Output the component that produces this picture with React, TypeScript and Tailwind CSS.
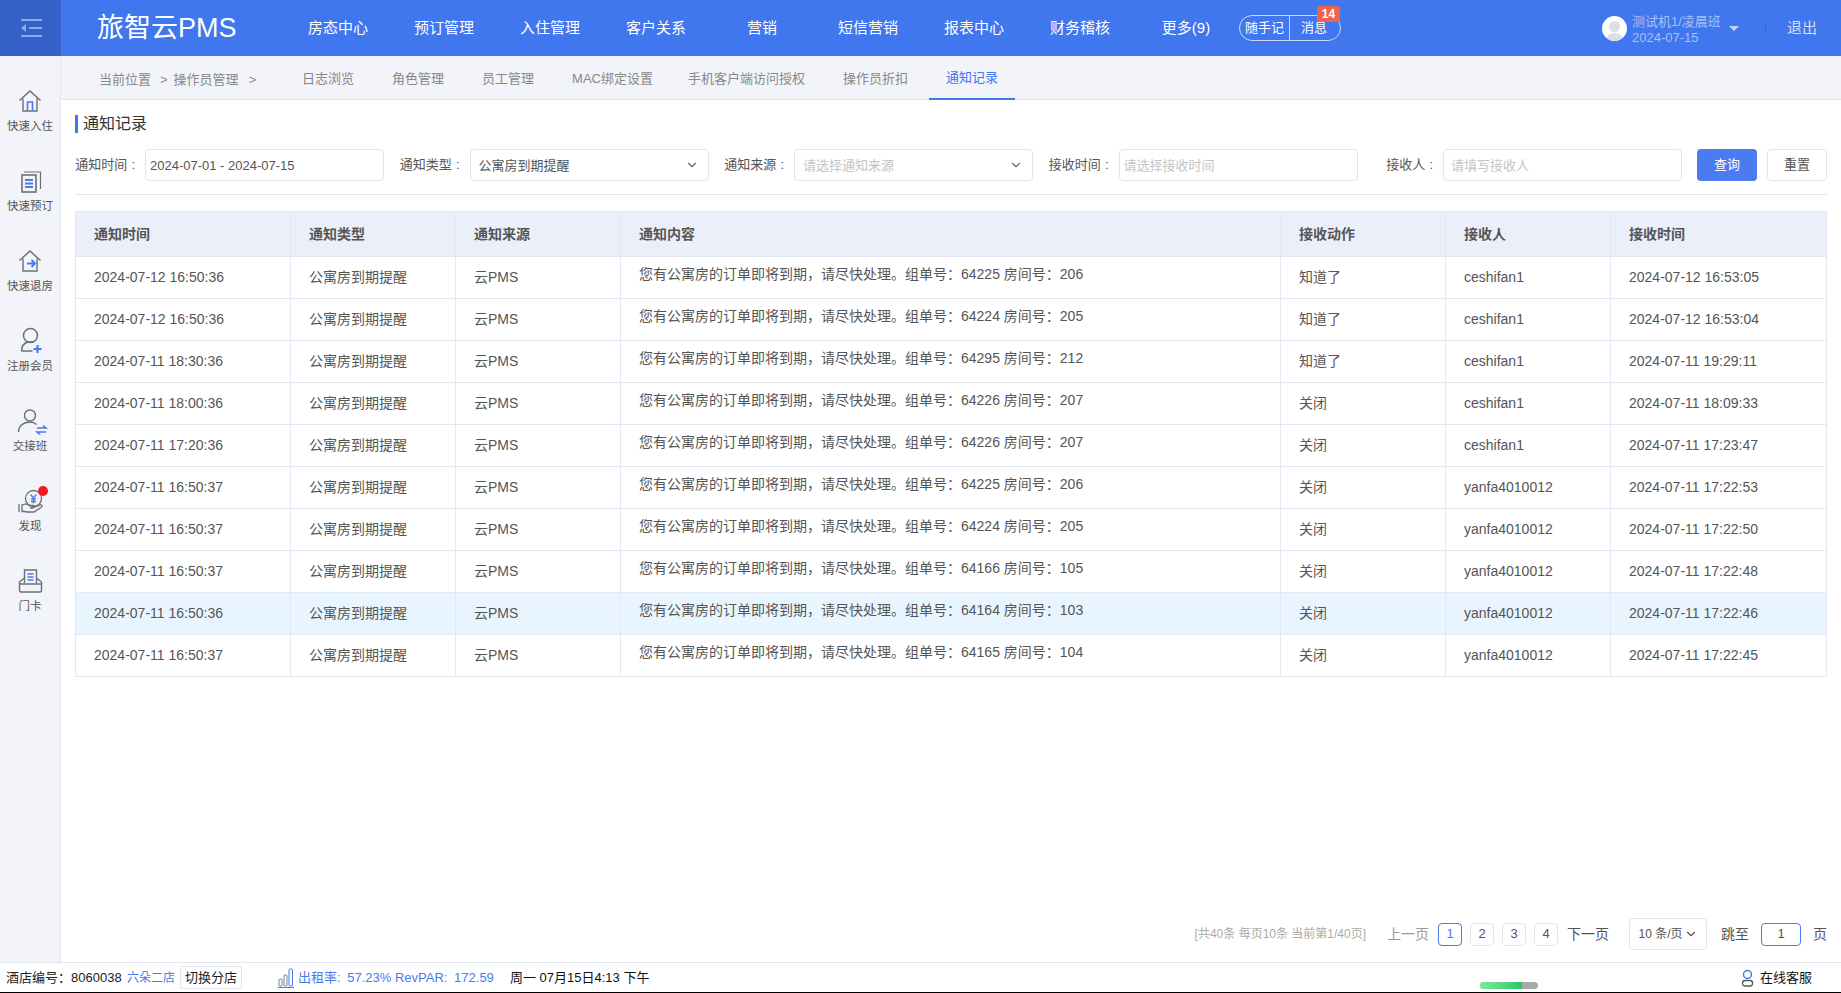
import { ChevronDown } from 'lucide-react';

const navItems = ['房态中心', '预订管理', '入住管理', '客户关系', '营销', '短信营销', '报表中心', '财务稽核', '更多(9)'];
const tabs = ['日志浏览', '角色管理', '员工管理', 'MAC绑定设置', '手机客户端访问授权', '操作员折扣', '通知记录'];
const columns = [
  { title: '通知时间', width: 'w-[215px]' },
  { title: '通知类型', width: 'w-[165px]' },
  { title: '通知来源', width: 'w-[165px]' },
  { title: '通知内容', width: 'w-[660px]' },
  { title: '接收动作', width: 'w-[165px]' },
  { title: '接收人', width: 'w-[165px]' },
  { title: '接收时间', width: 'w-[216px]' },
];

const rows = [
  ['2024-07-12 16:50:36', '64225', '206', '知道了', 'ceshifan1', '2024-07-12 16:53:05'],
  ['2024-07-12 16:50:36', '64224', '205', '知道了', 'ceshifan1', '2024-07-12 16:53:04'],
  ['2024-07-11 18:30:36', '64295', '212', '知道了', 'ceshifan1', '2024-07-11 19:29:11'],
  ['2024-07-11 18:00:36', '64226', '207', '关闭', 'ceshifan1', '2024-07-11 18:09:33'],
  ['2024-07-11 17:20:36', '64226', '207', '关闭', 'ceshifan1', '2024-07-11 17:23:47'],
  ['2024-07-11 16:50:37', '64225', '206', '关闭', 'yanfa4010012', '2024-07-11 17:22:53'],
  ['2024-07-11 16:50:37', '64224', '205', '关闭', 'yanfa4010012', '2024-07-11 17:22:50'],
  ['2024-07-11 16:50:37', '64166', '105', '关闭', 'yanfa4010012', '2024-07-11 17:22:48'],
  ['2024-07-11 16:50:36', '64164', '103', '关闭', 'yanfa4010012', '2024-07-11 17:22:46'],
  ['2024-07-11 16:50:37', '64165', '104', '关闭', 'yanfa4010012', '2024-07-11 17:22:45'],
];

const GREY = '#6b6f78';
const BLUE = '#4a7bea';

function HomeIcon() {
  return (
    <svg width="24" height="24" viewBox="0 0 24 24" fill="none">
      <path d="M1.5 11.5 12 2l10.5 9.5" stroke={GREY} strokeWidth="1.4" />
      <path d="M5 9.5V22h14V9.5" stroke={GREY} strokeWidth="1.4" />
      <path d="M9.5 21.5V13h5v8.5" stroke={BLUE} strokeWidth="1.6" />
    </svg>
  );
}

function BookIcon() {
  return (
    <svg width="24" height="24" viewBox="0 0 24 24" fill="none">
      <path d="M6 3h16.500v17" stroke={GREY} strokeWidth="1.2" />
      <rect x="4" y="6" width="14" height="17" stroke={GREY} strokeWidth="1.6" />
      <path d="M7 11h8M7 14.500h8M7 18h8" stroke={BLUE} strokeWidth="1.8" />
    </svg>
  );
}

function CheckoutIcon() {
  return (
    <svg width="24" height="24" viewBox="0 0 24 24" fill="none">
      <path d="M1.5 11.5 12 2l10.5 9.5" stroke={GREY} strokeWidth="1.4" />
      <path d="M5 9.5V22h14V9.5" stroke={GREY} strokeWidth="1.4" />
      <path d="M9 14.500h8M13.500 11l3.500 3.500-3.500 3.500" stroke={BLUE} strokeWidth="2" />
    </svg>
  );
}

function MemberIcon() {
  return (
    <svg width="24" height="24" viewBox="0 0 24 24" fill="none" className="overflow-visible">
      <circle cx="12.500" cy="6.500" r="7" stroke={GREY} strokeWidth="1.500" />
      <path d="M3.500 22c0-5 3-8 6.500-9h5" stroke={GREY} strokeWidth="1.500" />
      <path d="M3.500 22h11" stroke={GREY} strokeWidth="1.500" />
      <path d="M19.500 16v8M15.500 20h8" stroke={BLUE} strokeWidth="2.200" />
    </svg>
  );
}

function ShiftIcon() {
  return (
    <svg width="32" height="24" viewBox="0 0 32 24" fill="none" className="overflow-visible">
      <circle cx="16" cy="6.500" r="5.500" stroke={GREY} strokeWidth="1.400" />
      <path d="M4.500 23c0-6 5-10 11.500-10 3 0 5 1 6.500 2.500" stroke={GREY} strokeWidth="1.400" />
      <path d="M23 19h9l-3-2.500M32 23h-9l3 2.500" stroke={BLUE} strokeWidth="1.600" />
    </svg>
  );
}

function DiscoverIcon() {
  return (
    <svg width="26" height="26" viewBox="0 0 26 26" fill="none" className="overflow-visible">
      <circle cx="16.500" cy="10.500" r="8" stroke={GREY} strokeWidth="1.300" />
      <path d="M13.500 6.500l3 3.500 3-3.500M16.500 10v5.500M14 11h5M14 13.500h5" stroke={BLUE} strokeWidth="1.300" />
      <path d="M2 16v8M5 16.500v8" stroke={GREY} strokeWidth="1.300" />
      <path d="M5 17c3-1.500 5-1 7 .5h4c1.500 0 1.500 2.500 0 2.500h-3m3 0 7-3c2-.5 3 1 1 2.500l-7 4.500H10l-5-1" stroke={GREY} strokeWidth="1.300" />
    </svg>
  );
}

function CardIcon() {
  return (
    <svg width="25" height="24" viewBox="0 0 24 24" fill="none">
      <path d="M6 14V1h12v13" stroke={GREY} strokeWidth="1.400" />
      <path d="M9 5h6M9 8h6M9 11h6" stroke={BLUE} strokeWidth="1.500" />
      <path d="M6 9 1 13v8.500a1.500 1.500 0 0 0 1.500 1.500h19a1.500 1.500 0 0 0 1.500-1.500V13l-5-4M1 15h22" stroke={GREY} strokeWidth="1.400" />
    </svg>
  );
}

const sideItems = [
  { label: '快速入住', icon: <HomeIcon /> },
  { label: '快速预订', icon: <BookIcon /> },
  { label: '快速退房', icon: <CheckoutIcon /> },
  { label: '注册会员', icon: <MemberIcon /> },
  { label: '交接班', icon: <ShiftIcon /> },
  { label: '发现', icon: <DiscoverIcon />, dot: true },
  { label: '门卡', icon: <CardIcon /> },
];

function Field({ label, children }: { label: string; children: React.ReactNode }) {
  return (
    <div className="flex w-[309px] flex-none items-center">
      <span className="w-[70px] flex-none pr-[10px] text-right text-[13px] text-[#555]">
        {label}
        <span className="ml-[4px]">:</span>
      </span>
      {children}
    </div>
  );
}

function SelectBox({ text, placeholder }: { text: string; placeholder?: boolean }) {
  return (
    <div className="flex h-[32px] w-[239px] flex-none items-center justify-between rounded border border-[#e1e5f1] bg-white pl-[8px] pr-[9px]">
      <span className={placeholder ? 'pt-[1px] text-[13px] text-[#c4c4c4]' : 'pt-[1px] text-[13px] text-[#555]'}>{text}</span>
      <ChevronDown size={14} color="#666" />
    </div>
  );
}

function PageBox({ n, active }: { n: string; active?: boolean }) {
  return (
    <div
      className={
        active
          ? 'flex h-[23px] w-[24px] items-center justify-center rounded-sm border border-[#4a7bea] text-[13px] text-[#4a7bea]'
          : 'flex h-[23px] w-[24px] items-center justify-center rounded-sm border border-[#e1e5f1] text-[13px] text-[#555]'
      }
    >
      {n}
    </div>
  );
}

export default function App() {
  return (
    <div className="flex h-[993px] w-[1841px] flex-col overflow-hidden bg-white font-['Liberation_Sans','Noto_Sans_CJK_SC',sans-serif]">
      {/* top bar */}
      <header className="flex h-[56px] flex-none items-center bg-[#4076ee] text-white">
        <div className="flex h-full w-[61px] flex-none items-center justify-center bg-[#3562c8]">
          <svg width="22" height="18" viewBox="0 0 22 18" fill="none" stroke="#8fa9e6" strokeWidth="2">
            <path d="M1 1h21M9 9h13M1 17h21" />
            <path d="M6 5 1 9l5 4z" fill="#8fa9e6" stroke="none" />
          </svg>
        </div>
        <div className="w-[224px] flex-none pl-[36px] text-[27px] leading-none text-white">旅智云PMS</div>
        <nav className="flex w-[954px] flex-none pt-[1px]">
          {navItems.map((item) => (
            <div key={item} className="w-[106px] flex-none text-center text-[15px] text-white">
              {item}
            </div>
          ))}
        </nav>
        <div className="relative flex h-[26px] w-[102px] flex-none items-center rounded-full border border-[#c9d8fa] text-[13px]">
          <span className="w-[50px] flex-none border-r border-[#c9d8fa] text-center leading-[24px]">随手记</span>
          <span className="flex-1 pr-[2px] text-center">消息</span>
          <span className="absolute -top-[10px] right-0 flex h-[16px] w-[23px] items-center justify-center rounded-t-[3px] bg-[#ee6350] text-[12px] font-bold text-white">14</span>
        </div>
        <div className="ml-[261px] flex h-[25px] w-[25px] flex-none items-end justify-center overflow-hidden rounded-full bg-white">
          <svg width="25" height="25" viewBox="0 0 25 25">
            <circle cx="12.500" cy="10.500" r="5.500" fill="#dcdfe4" />
            <path d="M4 25c0-6 4-8 8.500-8s8.500 2 8.500 8z" fill="#dcdfe4" />
          </svg>
        </div>
        <div className="ml-[5px] w-[97px] flex-none pt-[4px] text-[13px] leading-[16px] text-[#a8c0f6]">
          <div>测试机1/凌晨班</div>
          <div>2024-07-15</div>
        </div>
        <svg width="10" height="5" viewBox="0 0 10 5" className="flex-none">
          <path d="M0 0h10L5 5z" fill="#c4d4f9" />
        </svg>
        <div className="ml-[26px] h-[11px] w-px flex-none bg-[#3a66cf]" />
        <div className="ml-[21px] text-[15px] text-[#d3dffb]">退出</div>
      </header>

      <div className="flex min-h-0 flex-1">
        {/* quick actions */}
        <aside className="w-[61px] flex-none border-r border-[#e4e6f0] bg-[#f2f4f9] pt-[25px]">
          {sideItems.map((item) => (
            <div key={item.label} className="flex h-[80px] flex-col items-center pt-[8px]">
              <div className="relative flex h-[24px] items-center justify-center">
                {item.icon}
                {item.dot && <span className="absolute -right-[5px] -top-[3px] h-[10px] w-[10px] rounded-full bg-[#ee1c25]" />}
              </div>
              <div className="mt-[7px] text-[11.500px] leading-[12px] text-[#555]">{item.label}</div>
            </div>
          ))}
        </aside>

        <main className="flex min-w-0 flex-1 flex-col">
          {/* breadcrumb and tabs */}
          <div className="flex h-[44px] flex-none items-stretch border-b border-[#e2e4ea] bg-[#f2f4f9]">
            <div className="flex w-[224px] flex-none items-center pl-[38px] pt-[4px] text-[13px] text-[#888]">
              <span>当前位置</span>
              <span className="ml-[9px]">&gt;</span>
              <span className="ml-[6px]">操作员管理</span>
              <span className="ml-[10px]">&gt;</span>
            </div>
            <div className="flex gap-[4px]">
              {tabs.map((tab) => (
                <div
                  key={tab}
                  className={
                    tab === '通知记录'
                      ? 'flex h-[44px] items-center border-b-2 border-[#4076ee] px-[17px] pt-[1px] text-[13px] text-[#4076ee]'
                      : tab.startsWith('MAC')
                        ? '-mr-[3px] flex h-[44px] items-center px-[17px] pt-[1px] text-[13px] text-[#888]'
                        : 'flex h-[44px] items-center px-[17px] pt-[1px] text-[13px] text-[#888]'
                  }
                >
                  {tab}
                </div>
              ))}
            </div>
          </div>

          <div className="flex min-h-0 flex-1 flex-col px-[14px] pt-[15px]">
            <div className="flex h-[18px] items-center border-l-[3px] border-[#4076ee] pl-[5px] text-[16px] text-[#333]">通知记录</div>

            {/* filters */}
            <div className="mt-[16px] flex h-[46px] flex-none items-start gap-[15.500px] border-b border-[#e2e4ea]">
              <Field label="通知时间">
                <input
                  readOnly
                  value="2024-07-01 - 2024-07-15"
                  className="h-[32px] w-[239px] flex-none rounded border border-[#e1e5f1] pl-[4px] text-[13px] text-[#555] outline-none"
                />
              </Field>
              <Field label="通知类型">
                <SelectBox text="公寓房到期提醒" />
              </Field>
              <Field label="通知来源">
                <SelectBox text="请选择通知来源" placeholder />
              </Field>
              <Field label="接收时间">
                <input
                  readOnly
                  placeholder="请选择接收时间"
                  className="h-[32px] w-[239px] flex-none rounded border border-[#e1e5f1] pl-[4px] text-[13px] outline-none placeholder:text-[#c4c4c4]"
                />
              </Field>
              <Field label="接收人">
                <input
                  readOnly
                  placeholder="请填写接收人"
                  className="h-[32px] w-[239px] flex-none rounded border border-[#e1e5f1] pl-[7px] text-[13px] outline-none placeholder:text-[#c4c4c4]"
                />
              </Field>
              <button className="-ml-[0.500px] h-[32px] w-[60px] flex-none rounded bg-[#4a7bf0] text-[13px] text-white">查询</button>
              <button className="-ml-[5.500px] h-[32px] w-[60px] flex-none rounded border border-[#e1e5f1] text-[13px] text-[#555]">重置</button>
            </div>

            {/* records */}
            <table className="mt-[16px] w-[1752px] table-fixed border-collapse">
              <colgroup>
                {columns.map((col) => (
                  <col key={col.title} className={col.width} />
                ))}
              </colgroup>
              <thead>
                <tr className="h-[45px] bg-[#ebeffa]">
                  {columns.map((col) => (
                    <th key={col.title} className="border border-[#e4e8f5] pl-[18px] text-left text-[14px] font-bold text-[#555]">
                      {col.title}
                    </th>
                  ))}
                </tr>
              </thead>
              <tbody>
                {rows.map((row, i) => (
                  <tr key={i} className={i === 8 ? 'h-[42px] bg-[#e8f5fe]' : 'h-[42px] bg-white'}>
                    <td className="border border-[#e4e8f5] pl-[18px] text-[14px] text-[#555]">{row[0]}</td>
                    <td className="border border-[#e4e8f5] pl-[18px] text-[14px] text-[#555]">公寓房到期提醒</td>
                    <td className="border border-[#e4e8f5] pl-[18px] text-[14px] text-[#555]">云PMS</td>
                    <td className="border border-[#e4e8f5] pb-[7px] pl-[18px] text-[14px] text-[#555]">
                      您有公寓房的订单即将到期，请尽快处理。组单号：{row[1]} 房间号：{row[2]}
                    </td>
                    <td className="border border-[#e4e8f5] pl-[18px] text-[14px] text-[#555]">{row[3]}</td>
                    <td className="border border-[#e4e8f5] pl-[18px] text-[14px] text-[#555]">{row[4]}</td>
                    <td className="border border-[#e4e8f5] pl-[18px] text-[14px] text-[#555]">{row[5]}</td>
                  </tr>
                ))}
              </tbody>
            </table>

            {/* pagination */}
            <div className="mt-auto mb-[12px] flex h-[32px] flex-none items-center justify-end">
              <span className="text-[12px] text-[#aaa]">[共40条 每页10条 当前第1/40页]</span>
              <span className="ml-[21px] text-[14px] text-[#999]">上一页</span>
              <div className="ml-[9px] flex gap-[8px]">
                <PageBox n="1" active />
                <PageBox n="2" />
                <PageBox n="3" />
                <PageBox n="4" />
              </div>
              <span className="ml-[9px] text-[14px] text-[#555]">下一页</span>
              <div className="ml-[20px] flex h-[32px] w-[78px] items-center justify-center gap-[1px] rounded border border-[#e1e5f1] text-[12px] text-[#555]">
                10 条/页
                <ChevronDown size={14} color="#555" />
              </div>
              <span className="ml-[14px] text-[14px] text-[#555]">跳至</span>
              <div className="ml-[12px] flex h-[23px] w-[40px] items-center justify-center rounded-sm border border-[#4a7bea] text-[13px] text-[#555]">1</div>
              <span className="ml-[12px] text-[14px] text-[#555]">页</span>
            </div>
          </div>
        </main>
      </div>

      {/* status bar */}
      <footer className="flex h-[31px] flex-none items-center border-t border-b border-t-[#e4e6f0] border-b-black bg-white pl-[6px] text-[13px] text-[#222]">
        <span className="w-[121px] flex-none">酒店编号：8060038</span>
        <span className="w-[53px] flex-none text-[12px] text-[#4a7bea]">六朵二店</span>
        <div className="flex h-[23px] w-[62px] flex-none items-center justify-center border border-[#e4e6f0]">切换分店</div>
        <svg width="16" height="20" viewBox="0 0 16 20" fill="none" stroke="#6f7ea0" className="ml-[36px] flex-none">
          <path d="M0 19.500h16" />
          <rect x="1" y="11" width="3" height="7" rx="1" />
          <rect x="6" y="7" width="3" height="11" rx="1" />
          <rect x="11" y="1" width="3.500" height="17" rx="1" stroke="#4a7bea" />
        </svg>
        <span className="ml-[4px] w-[212px] flex-none text-[#4a7bea]">
          出租率<span className="mr-[3px]">:</span> 57.23% RevPAR<span className="mr-[3px]">:</span> 172.59
        </span>
        <span className="w-[145px] flex-none text-[#111]">周一 07月15日4:13 下午</span>
        <div className="ml-[825px] mt-[16px] flex h-[7px] w-[58px] flex-none overflow-hidden rounded-full bg-[#a9a9a9]">
          <div className="h-full w-[42px] bg-gradient-to-r from-[#7fe8a0] to-[#27c764]" />
        </div>
        <svg width="13" height="18" viewBox="0 0 13 18" fill="none" className="ml-[203px] flex-none">
          <circle cx="6.500" cy="5.500" r="4" stroke="#4a7bea" strokeWidth="1.500" />
          <rect x="1.500" y="11.500" width="10" height="5.500" rx="2.500" stroke="#555" strokeWidth="1.300" />
        </svg>
        <span className="ml-[6px] flex-none text-[#111]">在线客服</span>
      </footer>
    </div>
  );
}
